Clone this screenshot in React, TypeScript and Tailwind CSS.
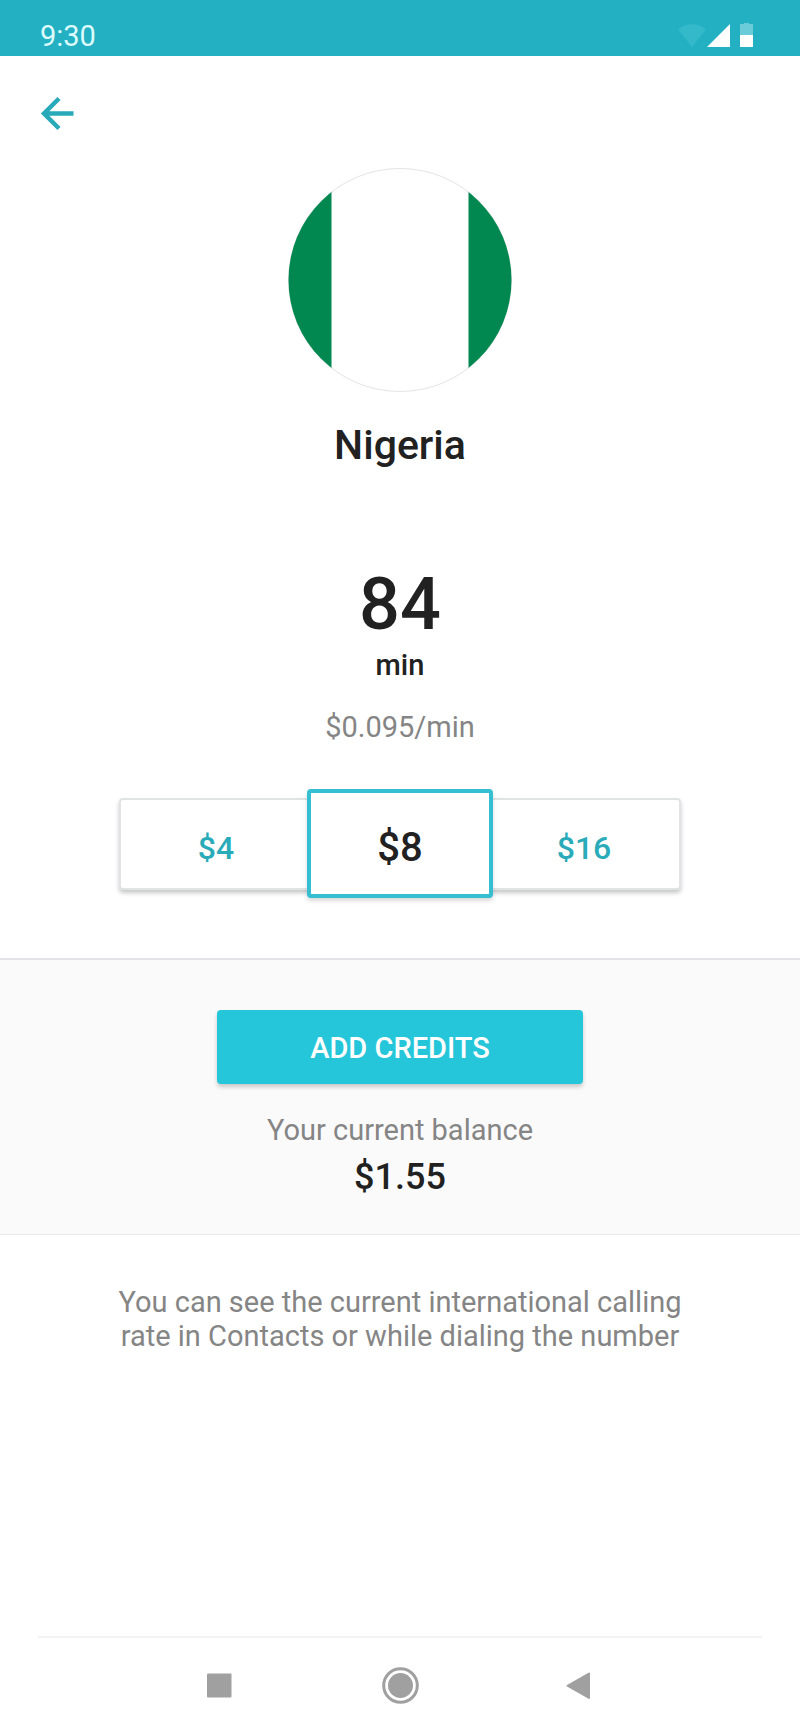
import React, { useState } from 'react';
import clsx from 'clsx';

const RATE = 0.095;
const AMOUNTS = [4, 8, 16];

const StatusBar: React.FC = () => (
  <div className="flex h-14 items-end justify-between bg-[#23b0c3] pr-[45px] pb-[3px] pl-10">
    <span className="text-[29px] leading-[34px] text-[#dcfbff]">9:30</span>
    <div className="flex items-center pb-1">
      {/* Wifi */}
      <svg width="28" height="26" viewBox="0 0 28 26" aria-hidden="true">
        <path d="M0 6.500C8.500-.5 19.500-.5 28 6.500L14 24Z" fill="#34b9ca" />
      </svg>
      {/* Signal */}
      <svg width="24" height="26" viewBox="0 0 24 26" aria-hidden="true">
        <path d="M24 1V24H1Z" fill="#ffffff" />
      </svg>
      {/* Battery */}
      <svg className="ml-[9px]" width="16" height="26" viewBox="0 0 16 26" aria-hidden="true">
        <path d="M5 -1h5v2h4v11H1V1h4Z" fill="#6accd9" />
        <path d="M1 12h13v12H1Z" fill="#ffffff" />
      </svg>
    </div>
  </div>
);

const NigeriaFlag: React.FC = () => (
  <svg width="224" height="224" viewBox="0 0 224 224" role="img" aria-label="Flag of Nigeria">
    <defs>
      <clipPath id="flag-circle">
        <circle cx="112" cy="112" r="111.500" />
      </clipPath>
    </defs>
    <circle cx="112" cy="112" r="111.500" fill="#ffffff" stroke="#e4e4e4" />
    <g clipPath="url(#flag-circle)" fill="#008850">
      <rect width="43.500" height="224" />
      <rect x="180.500" width="43.500" height="224" />
    </g>
  </svg>
);

interface AmountPickerProps {
  selected: number;
  onSelect: (amount: number) => void;
}

const AmountPicker: React.FC<AmountPickerProps> = ({ selected, onSelect }) => (
  <div className="flex w-full max-w-[562px] items-center" role="group" aria-label="Credit amount">
    {AMOUNTS.map((amount) => {
      const isSelected = amount === selected;

      return (
        <button
          key={amount}
          type="button"
          aria-pressed={isSelected}
          onClick={() => onSelect(amount)}
          className={clsx(
            'rounded-[4px] bg-white pt-2 font-medium',
            isSelected
              ? 'z-10 -mx-1.5 h-[109px] w-[186px] border-4 border-[#35bfd0] text-[40px] text-[#212121] shadow-[0_3px_4px_rgba(0,0,0,0.15)]'
              : 'h-[92px] flex-1 border-2 border-[#e0e4e5] text-[32px] text-[#2aabb9] shadow-[0_3px_4px_rgba(0,0,0,0.22)]'
          )}
        >
          ${amount}
        </button>
      );
    })}
  </div>
);

const NavBar: React.FC = () => (
  <nav className="mx-[38px] mt-auto border-t-2 border-[#f3f3f3]" aria-label="System">
    <div className="mx-auto grid h-[95px] max-w-[546px] grid-cols-3 place-items-center text-[#a0a0a0]">
      <button type="button" aria-label="Recent apps">
        <svg width="40" height="40" viewBox="0 0 40 40" fill="currentColor">
          <rect x="9" y="7.500" width="24.500" height="24" rx="1" />
        </svg>
      </button>
      <button type="button" aria-label="Home">
        <svg width="40" height="40" viewBox="0 0 40 40" fill="currentColor">
          <circle cx="20.500" cy="19.500" r="12.500" />
          <circle cx="20.500" cy="19.500" r="16.800" fill="none" stroke="currentColor" strokeWidth="3" />
        </svg>
      </button>
      <button type="button" aria-label="Back">
        <svg width="40" height="40" viewBox="0 0 40 40" fill="currentColor" stroke="currentColor" strokeWidth="2" strokeLinejoin="round">
          <path d="M27 7.500V32L5.500 19.750Z" />
        </svg>
      </button>
    </div>
  </nav>
);

export default function App() {
  const [amount, setAmount] = useState(8);

  return (
    <div className="flex min-h-screen flex-col bg-white font-[Roboto,sans-serif] text-[#212121]">
      <StatusBar />

      <header className="flex h-28 items-start px-[38px] pt-[38px]">
        <button type="button" aria-label="Back" className="text-[#29aab9]">
          <svg width="38" height="38" viewBox="0 0 38 38" fill="none" stroke="currentColor" strokeWidth="4.500">
            <path d="M35.500 19.500H6M21 4.500L6 19.500L21 34.500" />
          </svg>
        </button>
      </header>

      <main className="flex flex-col items-center">
        <section className="flex w-full flex-col items-center px-6 pb-[60px]">
          <NigeriaFlag />
          <h1 className="mt-[29px] text-[41px] leading-[48px] font-medium">Nigeria</h1>
          <p className="mt-[100px] text-7xl leading-[72px] font-medium">{Math.floor(amount / RATE)}</p>
          <p className="mt-2 text-[29px] leading-8 font-medium">min</p>
          <p className="mt-7 mb-11 text-[29px] leading-9 text-[#858585]">${RATE}/min</p>
          <AmountPicker selected={amount} onSelect={setAmount} />
        </section>

        <section className="flex w-full flex-col items-center border-t-2 border-b border-t-[#e1e3e6] border-b-[#e8e8e8] bg-[#fafafa] px-6 pt-[50px] pb-9">
          <button
            type="button"
            className="h-[74px] w-full max-w-[366px] rounded-[4px] bg-[#26c6da] pt-1 text-[29px] font-medium text-white shadow-[0_3px_4px_rgba(0,0,0,0.2)]"
          >
            ADD CREDITS
          </button>
          <p className="mt-7 text-[29px] leading-9 text-[#858585]">Your current balance</p>
          <p className="mt-2 text-4xl leading-[42px] font-medium">$1.55</p>
        </section>

        <p className="max-w-[620px] px-6 pt-[50px] text-center text-[29px] leading-[34px] text-[#858585]">
          You can see the current international calling rate in Contacts or while dialing the number
        </p>
      </main>

      <NavBar />
    </div>
  );
}
